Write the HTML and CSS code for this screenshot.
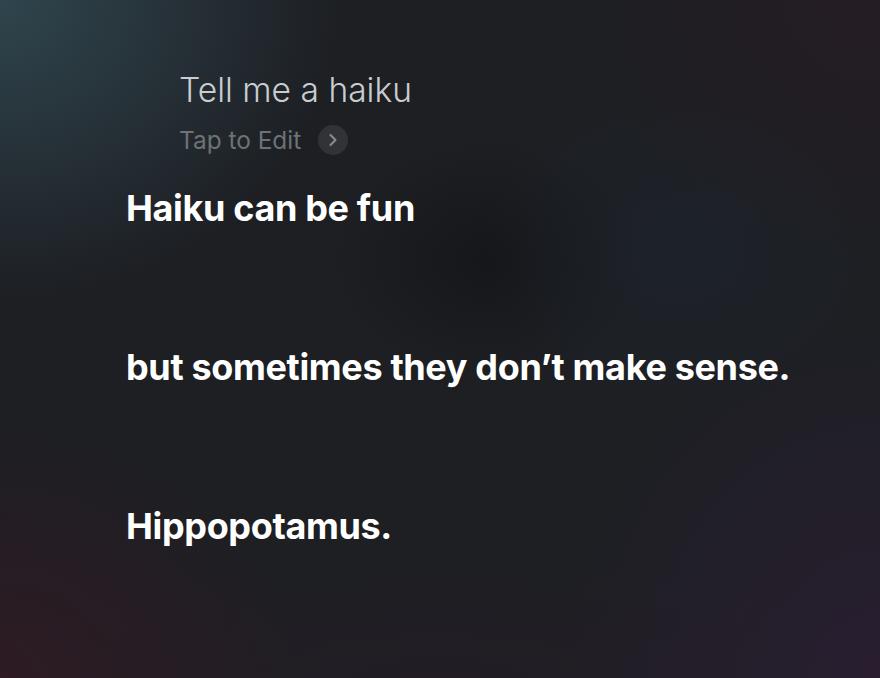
FILE: index.html
```html
<!DOCTYPE html>
<html>
<head>
	<meta charset="utf-8" />
	<meta name="viewport" content="width=device-width,initial-scale=1.0" />
	<title>Siri</title>
	<link rel="stylesheet" href="styles.css">
</head>
<body>
<div class="screen">
	<div class="query">
		<p class="query-text">Tell me a haiku</p>
		<div class="edit">
			<span>Tap to Edit</span>
			<span class="edit-btn">
				<svg width="12" height="14" viewBox="0 0 12 14"><path d="M3.5 2 L8.5 7 L3.5 12" fill="none" stroke="#8a8e93" stroke-width="2" stroke-linecap="round" stroke-linejoin="round"/></svg>
			</span>
		</div>
	</div>
	<ul class="answer">
		<li>Haiku can be fun</li>
		<li>but sometimes they don’t make sense.</li>
		<li>Hippopotamus.</li>
	</ul>
</div>
</body>
</html>
```

FILE: styles.css
```css
* {
	margin: 0;
	padding: 0;
}
ul {
	list-style: none;
}
html, body {
	height: 100%;
}
body {
	background: #1d1f23;
	font-family: Inter, "Liberation Sans", sans-serif;
	overflow: hidden;
}
.screen {
	height: 100%;
	box-sizing: border-box;
	padding: 68px 0 0 126px;
	background:
		radial-gradient(ellipse 340px 300px at 0 0, rgba(52, 78, 88, 0.8), rgba(52, 78, 88, 0) 100%),
		radial-gradient(ellipse 300px 260px at 0 678px, rgba(50, 26, 36, 0.8), rgba(50, 26, 36, 0) 100%),
		radial-gradient(ellipse 320px 360px at 880px 678px, rgba(42, 30, 50, 0.9), rgba(42, 30, 50, 0) 100%),
		radial-gradient(ellipse 300px 260px at 880px 0, rgba(38, 28, 36, 0.9), rgba(38, 28, 36, 0) 100%),
		radial-gradient(ellipse 500px 120px at 440px 678px, rgba(38, 28, 38, 0.6), rgba(38, 28, 38, 0) 100%),
		radial-gradient(ellipse 200px 160px at 680px 250px, rgba(30, 40, 52, 0.4), rgba(30, 40, 52, 0) 100%),
		radial-gradient(ellipse 160px 120px at 490px 260px, rgba(18, 19, 22, 0.7), rgba(18, 19, 22, 0) 100%),
		#1d1f23;
}
.query {
	padding-left: 53px;
}
.query-text {
	color: #c9cdd1;
	font-size: 33.6px;
	font-weight: 300;
	line-height: 44px;
}
.edit {
	display: flex;
	align-items: center;
	gap: 17px;
	margin-top: 12px;
	color: #6d7276;
	font-size: 24.4px;
	line-height: 32px;
}
.edit-btn {
	width: 30px;
	height: 30px;
	border-radius: 50%;
	background: rgba(255, 255, 255, 0.09);
	display: flex;
	align-items: center;
	justify-content: center;
}
.answer {
	display: flex;
	flex-direction: column;
	gap: 115px;
	margin-top: 30px;
}
.answer li {
	color: #fff;
	font-size: 36px;
	font-weight: 700;
	line-height: 44px;
	letter-spacing: -0.35px;
}
```
